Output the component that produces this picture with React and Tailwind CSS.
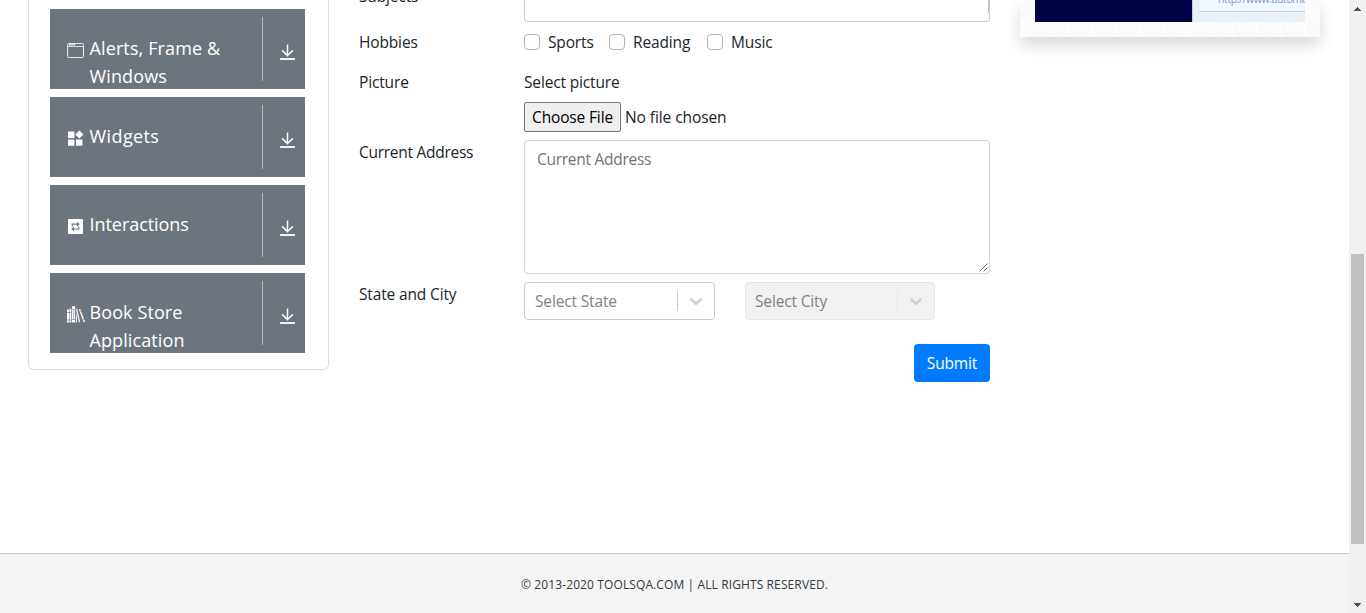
import React from "react";

function WindowIcon() {
  return (
    <svg width="18" height="18" viewBox="0 0 18 18" fill="none" stroke="#fff">
      <rect x="0.6" y="1.5" width="15.9" height="14" rx="1" strokeWidth="1" strokeOpacity="0.85" />
      <path d="M0.6 4.5H16.4" strokeWidth="0.9" strokeOpacity="0.85" />
      <path d="M2 2.8H8.8" strokeWidth="1.5" strokeDasharray="1.5 0.8" />
    </svg>
  );
}

function WidgetsIcon() {
  return (
    <svg width="18" height="18" viewBox="0 0 18 18" fill="#fff">
      <path d="M1 1.5h6.4v6.4H1zM1 9.4h6.4v6.4H1zM9 9.4h6.4v6.4H9zM12.4 0.4l4 4.1-4 4.1-4.1-4.1z" />
    </svg>
  );
}

function InteractionsIcon() {
  return (
    <svg width="18" height="18" viewBox="0 0 18 18" fill="none">
      <rect x="1" y="1" width="15" height="15" rx="1" fill="#fff" />
      <path d="M5.3 8.4V6.2H11.4M10 4.4l1.8 1.8L10 8M11.8 8.8V11H5.6M7 9.3l-1.8 1.7L7 12.7" stroke="#6c757d" strokeWidth="1.2" />
    </svg>
  );
}

function BooksIcon() {
  return (
    <svg width="18" height="18" viewBox="0 0 18 18" fill="#fff">
      <path d="M0 3.5h1.9V16.5H0zM2.5 2.8h1.8v13.7H2.5zM5 0.3h3.2v16.2H5zM9 2.8l1.2-.3L13.2 16.2h-1.3zM9 7l.9 4v5.5H9z" />
      <path d="M11.9 3.5l1.3-.4L18 15.7l-1.4.6z" />
      <path d="M0 6.5h4.3M5 3.6h3.2M5 13.5h3.2M0 14h4.3M12.8 5.8l1.6-.5M15.5 14l1.6-.6M6.7 4.8v8" stroke="#6c757d" strokeWidth="0.6" />
    </svg>
  );
}

function DownIcon() {
  return (
    <svg width="15" height="17" viewBox="0 0 15 17" fill="none" stroke="#fff" strokeWidth="1.5">
      <path d="M7.5 0.5V11.6M2.2 6.4l5.3 5.3 5.3-5.3" />
      <path d="M0 15H15" strokeWidth="1.8" />
    </svg>
  );
}

function MenuItem({ icon, label, tracking }) {
  return (
    <div className="flex h-20 shrink-0 overflow-hidden bg-[#6c757d] pt-2 text-white">
      <div className="flex h-16 w-[213px] items-start border-r border-[#bababa] pl-[17px] pt-[17px]">
        <span className="mt-2 w-[22.5px] shrink-0">{icon}</span>
        <span className={`text-[18px] leading-7 whitespace-pre-line ${tracking}`}>{label}</span>
      </div>
      <div className="pl-[17px] pt-[27px]">
        <DownIcon />
      </div>
    </div>
  );
}

function Sidebar() {
  return (
    <aside className="ml-7 h-[370px] w-[301px] shrink-0 rounded-b-md border border-t-0 border-[#dcdcdc] bg-white px-[21px] pt-[9px]">
      <div className="flex w-[255px] flex-col gap-2">
        <MenuItem icon={<WindowIcon />} label={"Alerts, Frame &\nWindows"} tracking="tracking-[0.12px]" />
        <MenuItem icon={<WidgetsIcon />} label="Widgets" tracking="tracking-[0.4px]" />
        <MenuItem icon={<InteractionsIcon />} label="Interactions" tracking="tracking-[-0.05px]" />
        <MenuItem icon={<BooksIcon />} label={"Book Store\nApplication"} tracking="tracking-[0.1px]" />
      </div>
    </aside>
  );
}

function Check({ label, width }) {
  return (
    <label className={`flex items-start ${width}`}>
      <span className="mt-1 mr-2 size-4 shrink-0 rounded-[4px] border border-[#adb5bd] bg-white" />
      {label}
    </label>
  );
}

function Select({ label, disabled }) {
  return (
    <div
      className={`flex h-[38px] items-center rounded-[4px] border text-[#808080] ${
        disabled ? "w-[190px] border-[#e6e6e6] bg-[#f2f2f2] pl-[9px]" : "w-[191px] border-[#cccccc] bg-white pl-2.5"
      }`}
    >
      <span className="grow">{label}</span>
      <span className={`h-5 w-px ${disabled ? "bg-[#e6e6e6]" : "bg-[#cccccc]"}`} />
      <svg width="20" height="20" viewBox="0 0 20 20" fill="#cccccc" className="mx-2">
        <path d="M4.516 7.548c0.436-0.446 1.043-0.481 1.576 0l3.908 3.747 3.908-3.747c0.533-0.481 1.141-0.446 1.574 0 0.436 0.445 0.408 1.197 0 1.615-0.406 0.418-4.695 4.502-4.695 4.502-0.217 0.223-0.502 0.335-0.787 0.335s-0.57-0.112-0.789-0.335c0 0-4.287-4.084-4.695-4.502s-0.436-1.17 0-1.615z" />
      </svg>
    </div>
  );
}

function Form() {
  return (
    <main className="ml-[30px] w-[631px] shrink-0 text-[15.5px] leading-6 tracking-[-0.15px] text-[#212529]">
      <div className="flex h-[30px] items-start overflow-hidden">
        <span className="-mt-4 w-[165px]">Subjects</span>
        <div className="flex h-[22px] grow justify-end rounded-b-[4px] border border-t-0 border-[#cccccc]">
          <span className="h-[13px] w-px bg-[#c1c1c1]" />
        </div>
      </div>
      <div className="flex h-10 items-start">
        <span className="w-[165px]">Hobbies</span>
        <Check label="Sports" width="w-[85px]" />
        <Check label="Reading" width="w-[98px]" />
        <Check label="Music" width="w-[90px]" />
      </div>
      <div className="flex h-[70px] items-start">
        <span className="w-[165px]">Picture</span>
        <div>
          <div>Select picture</div>
          <div className="mt-2 flex h-[30px] items-center">
            <button className="h-[30px] w-[97px] rounded-[2px] border border-[#767676] bg-[#efefef] text-black">Choose File</button>
            <span className="ml-1 tracking-[-0.08px]">No file chosen</span>
          </div>
        </div>
      </div>
      <div className="flex h-[142px] items-start">
        <span className="w-[165px] tracking-[-0.27px]">Current Address</span>
        <div className="flex h-[134px] grow items-end justify-between rounded-[4px] border border-[#ced4da] pl-3 text-[#6c757d]">
          <span className="self-start pt-[6px] tracking-[-0.27px]">Current Address</span>
          <svg width="10" height="10" viewBox="0 0 10 10" fill="none" stroke="#555" strokeWidth="0.9">
            <path d="M0.5 8.5L8.5 0.5M4.5 8.5L8.5 4.5" />
          </svg>
        </div>
      </div>
      <div className="flex h-[62px] items-start">
        <span className="w-[165px]">State and City</span>
        <Select label="Select State" />
        <div className="ml-[30px]">
          <Select label="Select City" disabled />
        </div>
      </div>
      <div className="flex justify-end">
        <button className="h-[38px] w-[76px] rounded-[4px] bg-[#007bff] text-white">Submit</button>
      </div>
    </main>
  );
}

function Banner() {
  return (
    <div className="relative ml-[30px] h-[37px] w-[300px] shrink-0 bg-[#fafafa] px-[15px] shadow-[0_8px_16px_rgba(0,0,0,0.15)]">
      <svg className="absolute inset-x-0 top-0" width="300" height="37" fill="none" stroke="#fff" strokeWidth="1.3">
        <path d="M2 20V37M49 20V37M72 20V37M95 20V37M120 20V37M144 20V37M166 20V37M190 20V37M213 20V37M237 20V37M261 20V37M285 20V37M2 21L26 34L49 21L72 34L95 21L120 34L144 21L166 34L190 21L213 34L237 21L261 34L285 21L300 13" />
      </svg>
      <div className="relative flex h-[22px] overflow-hidden bg-[#e9f1f5]">
        <div className="w-[157px] shrink-0 bg-[#000045]" />
        <div className="w-px shrink-0 bg-[#c5cede]" />
        <div className="ml-[5px] h-[12px] grow rounded-bl-[2px] border-b border-l border-b-[#c6cfdf] border-l-[#dbe4ef] bg-[#f0f7fe]">
          <div className="-mt-[7px] ml-[19px] text-[10.5px] leading-3 tracking-[-0.4px] whitespace-nowrap text-[#7f98c8]">http://www.automat</div>
        </div>
      </div>
    </div>
  );
}

function Scrollbar() {
  return (
    <div className="flex h-full w-[17px] shrink-0 flex-col items-center bg-[#f1f1f1]">
      <svg width="17" height="17" fill="#505050" shapeRendering="crispEdges">
        <path d="M5 11h7v-1h-1v-1h-1v-1h-1v-1h-1v1h-1v1h-1v1h-1z" />
      </svg>
      <div className="mt-[237px] h-[290px] w-[13px] bg-[#c1c1c1]" />
      <svg className="mt-auto" width="17" height="17" fill="#505050" shapeRendering="crispEdges">
        <path d="M5 7h7v1h-1v1h-1v1h-1v1h-1v-1h-1v-1h-1v-1h-1z" />
      </svg>
    </div>
  );
}

export default function App() {
  return (
    <div className="flex h-[613px] w-[1366px] overflow-hidden bg-white font-['Open_Sans','Noto_Sans',sans-serif]">
      <div className="flex w-[1349px] shrink-0 flex-col">
        <div className="flex h-[553px] items-start overflow-hidden">
          <Sidebar />
          <Form />
          <Banner />
        </div>
        <footer className="flex h-[60px] items-center justify-center border-t border-[#cccccc] bg-[#f4f4f4] pt-[3px] text-[12px] tracking-[0.11px] text-[#343a40]">
          © 2013-2020 TOOLSQA.COM | ALL RIGHTS RESERVED.
        </footer>
      </div>
      <Scrollbar />
    </div>
  );
}
